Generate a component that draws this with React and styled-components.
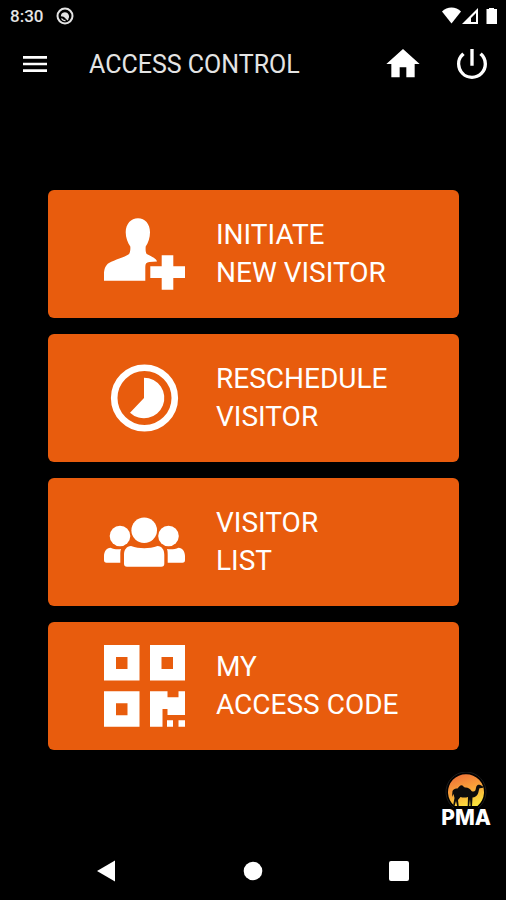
import React from 'react'
import styled, { createGlobalStyle } from 'styled-components'
import { MdHome, MdMenu, MdPowerSettingsNew } from 'react-icons/md'

const VisitorAddIcon = () => (
  <svg viewBox="0 0 82 82" fill="currentColor" aria-hidden="true">
    <path d="M34 5.300c-7 0-12.300 5.600-12.300 14 0 5.200 2 10.500 4.600 14.200.2 3 0 5.500-1.200 7.500-5 3.800-14.200 5.500-20.100 9C1.500 52 0 56.500 0 61v6.700h41.300V54c0-3.300 1.200-4.800 4-5l7.700-.5c-.5-2.800-4.500-4.500-10.300-7.500-1.200-2-1.200-4.500-1-7.500 2.600-3.700 4.300-9 4.300-14.200 0-8.400-5-14-12-14z" />
    <path d="M57.700 42.300h11.600v11H81V65H69.300v11.700H57.700V65H46.300V53.300h11.400z" />
  </svg>
)

const ScheduleIcon = () => (
  <svg viewBox="0 0 82 82" fill="currentColor" aria-hidden="true">
    <circle cx="40.500" cy="41" r="30.300" fill="none" stroke="currentColor" strokeWidth="6.600" />
    <path d="M40 41V20.700A20.300 20.300 0 1 1 26 55.700z" />
  </svg>
)

const GroupIcon = () => (
  <svg viewBox="0 0 82 82" fill="currentColor" aria-hidden="true">
    <circle cx="40.200" cy="29.300" r="12.800" />
    <circle cx="16" cy="35" r="10.300" />
    <circle cx="64.500" cy="35" r="10.300" />
    <path d="M27 45c8.500 3 18 3 26.500 0 4.500.5 6.800 3.500 6.800 9v8.700q0 3-3 3H23q-3 0-3-3V54c0-5.500 2.500-8.500 7-9z" />
    <path d="M6.500 46.700c3.500 1.500 7 2 10.500 1.300-.7 2-.7 4-.7 6v7.700H2.500Q0 61.700 0 59v-4c0-4.500 2.500-8 6.500-8.300z" />
    <path d="M74.500 46.700c-3.500 1.500-7 2-11.500 1.300.7 2 .7 4 .7 6v7.700h14.800q2.500 0 2.500-2.700v-4c0-4.500-2.500-8-6.500-8.300z" />
  </svg>
)

const QrIcon = () => (
  <svg viewBox="0 0 82 82" fill="currentColor" fillRule="evenodd" aria-hidden="true">
    <path d="M0 0h35.500v35.500H0zM12 12v12h11.500V12z" />
    <path d="M46 0h35v35.500H46zM57.500 12v12H69V12z" />
    <path d="M0 46.300h35.500v35.500H0zM12 58.300v12h11.500v-12z" />
    <path d="M46 46.300h17.500v6h11v-6H81V70H63.500v-6h-5v17.800H46z" />
    <path d="M63 75.300h6v6.500h-6zM74.500 75.300H81v6.500h-6.500z" />
  </svg>
)

const CamelLogo = () => (
  <svg width="44" height="38" viewBox="0 0 44 38" aria-hidden="true">
    <defs>
      <linearGradient id="sun" x1="0.200" y1="0" x2="0.600" y2="1">
        <stop offset="0" stopColor="#ee6f38" />
        <stop offset="0.500" stopColor="#f9a03a" />
        <stop offset="1" stopColor="#fbe13c" />
      </linearGradient>
    </defs>
    <path d="M10 36a20 20 0 1 1 24 0" fill="none" stroke="#1c1c1c" />
    <path d="M10.500 34a18 18 0 1 1 23 0z" fill="url(#sun)" />
    <path
      d="M8.500 19c1-2 3-2.500 5-2.500 1.500-2 2.500-3.300 4-3.300s2 1.800 3.500 2.300c3-.2 5 1 6.500 3.500 1.500.8 3 .8 3.800-.5.8-1.500.5-4 2-5.200 1-.8 2-.5 3-.3l2.700 1.500c.5.800-.3 1.500-1.200 1.500l-2.300.2c-.8 1.500-.8 4-1.700 5.800-1.200 2.300-3 3.300-5.300 3.500L28 34h-1.500l-.5-7-.8 7h-1.500l.3-9c-2.500.8-5 .8-7.500 0L14 28l.7 6h-1.500L12 29l-1.500 5H9l1.500-8-1-4-1.500 3z"
      fill="#0c0c0c"
    />
  </svg>
)

const actions = [
  { lines: ['INITIATE', 'NEW VISITOR'], icon: VisitorAddIcon },
  { lines: ['RESCHEDULE', 'VISITOR'], icon: ScheduleIcon },
  { lines: ['VISITOR', 'LIST'], icon: GroupIcon },
  { lines: ['MY', 'ACCESS CODE'], icon: QrIcon },
]

const App = () => {
  return (
    <>
      <GlobalStyle />
      <Screen>
        <StatusBar>
          <Time>8:30</Time>
          <svg width="18" height="18" viewBox="0 0 18 18" fill="none" stroke="#e4e4e4" aria-hidden="true">
            <circle cx="9" cy="9" r="7.500" strokeWidth="2" />
            <path d="M5 7.500c2-3 6-3 7.500 0 1 2 .5 3.500-.5 5z" fill="#e4e4e4" stroke="none" />
            <path d="M5 8.500l3 .5 4 4M5.500 11.500a4 4 0 0 0 4 2" strokeWidth="1.300" />
          </svg>
          <StatusIcons>
            <svg width="56" height="18" viewBox="0 0 56 18" fill="#fff" aria-hidden="true">
              <path d="M0 4.500C5-.8 14-.8 19 4.500L9.500 16.500z" />
              <path d="M36 1v16H20zM34 6l-5 5v4h5z" fillRule="evenodd" />
              <path d="M47 1h5v1h3v15H44.500V2H47z" />
            </svg>
          </StatusIcons>
        </StatusBar>

        <Header>
          <IconButton aria-label="Menu" $size={32}>
            <MdMenu />
          </IconButton>
          <Title>ACCESS CONTROL</Title>
          <HeaderActions>
            <IconButton aria-label="Home" $size={40}>
              <MdHome />
            </IconButton>
            <IconButton aria-label="Log out" $size={40}>
              <MdPowerSettingsNew />
            </IconButton>
          </HeaderActions>
        </Header>

        <Main>
          {actions.map(({ lines, icon: Icon }) => (
            <ActionCard key={lines.join(' ')}>
              <Icon />
              <span>
                {lines[0]}
                <br />
                {lines[1]}
              </span>
            </ActionCard>
          ))}
        </Main>

        <Brand>
          <CamelLogo />
          <BrandName>PMA</BrandName>
        </Brand>

        <NavBar>
          <NavButton aria-label="Back">
            <svg width="22" height="22" viewBox="0 0 22 22" fill="#fff">
              <path d="M2 11L20 .5v21z" />
            </svg>
          </NavButton>
          <NavButton aria-label="Home screen">
            <svg width="22" height="22" viewBox="0 0 22 22" fill="#fff">
              <circle cx="11" cy="11" r="9.300" />
            </svg>
          </NavButton>
          <NavButton aria-label="Recent apps">
            <svg width="22" height="22" viewBox="0 0 22 22" fill="#fff">
              <rect x="1" y="1" width="20" height="20" rx="2" />
            </svg>
          </NavButton>
        </NavBar>
      </Screen>
    </>
  )
}

const GlobalStyle = createGlobalStyle`
  * {
    box-sizing: border-box;
  }

  body {
    margin: 0;
    background: #000;
  }

  button {
    padding: 0;
    border: 0;
    background: none;
    color: inherit;
    font: inherit;
    cursor: pointer;
  }

  svg {
    display: block;
    flex-shrink: 0;
  }
`

const Screen = styled.div`
  display: flex;
  flex-direction: column;
  min-height: 100vh;
  background: #000;
  color: #fff;
  font-family: Roboto, sans-serif;
`

const StatusBar = styled.div`
  display: flex;
  align-items: center;
  gap: 13px;
  height: 32px;
  padding: 0 8px 0 10px;
`

const Time = styled.span`
  color: #e4e4e4;
  font-size: 17px;
  font-weight: 500;
`

const StatusIcons = styled.div`
  margin-left: auto;
`

const Header = styled.header`
  display: flex;
  align-items: center;
  height: 64px;
  padding: 0 14px 0 19px;
`

const IconButton = styled.button`
  svg {
    width: ${({ $size }) => $size}px;
    height: ${({ $size }) => $size}px;
  }
`

const Title = styled.h1`
  margin: 0 0 0 38px;
  color: #e4e4e4;
  font-size: 25px;
  font-weight: 400;
`

const HeaderActions = styled.div`
  display: flex;
  gap: 29px;
  margin-left: auto;
`

const Main = styled.main`
  display: flex;
  flex: 1;
  flex-direction: column;
  gap: 16px;
  padding: 94px 47px 22px 48px;
`

const ActionCard = styled.button`
  display: flex;
  align-items: center;
  gap: 30px;
  height: 128px;
  padding: 0 16px 0 56px;
  border-radius: 6px;
  background: #e85c0d;
  font-size: 28px;
  line-height: 38px;
  text-align: left;

  svg {
    width: 82px;
    height: 82px;
  }
`

const Brand = styled.div`
  display: flex;
  flex-direction: column;
  align-items: center;
  align-self: flex-end;
  margin-right: 15px;
`

const BrandName = styled.span`
  font-family: Inter, sans-serif;
  font-size: 21px;
  font-weight: 800;
  line-height: 16px;
`

const NavBar = styled.nav`
  display: flex;
  align-items: center;
  justify-content: space-between;
  height: 58px;
  margin-top: 16px;
  padding: 0 96px 0 95px;
`

const NavButton = styled.button`
  display: flex;
`

export default App
